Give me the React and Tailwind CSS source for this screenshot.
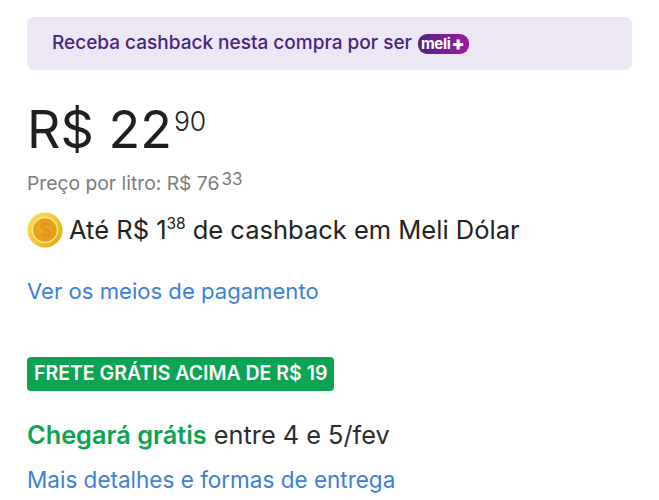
import React from "react";

const Coin = () => (
  <svg width="36" height="36" viewBox="0 0 36 36" className="shrink-0">
    <defs>
      <linearGradient id="coinRim" x1="0" y1="0" x2="1" y2="1">
        <stop offset="0%" stopColor="#fbe05a" />
        <stop offset="55%" stopColor="#f3c52c" />
        <stop offset="100%" stopColor="#e2a012" />
      </linearGradient>
      <radialGradient id="coinFace" cx="45%" cy="45%" r="60%">
        <stop offset="0%" stopColor="#efab22" />
        <stop offset="100%" stopColor="#e29a12" />
      </radialGradient>
    </defs>
    <circle cx="18" cy="18" r="17.5" fill="url(#coinRim)" />
    <circle cx="18" cy="18" r="12.5" fill="url(#coinFace)" stroke="#fde887" strokeWidth="1.5" />
    <path d="M22.5 13.5c-1-1.6-2.7-2-4.3-1.9-2.3.2-3.8 1.5-3.6 3.2.2 3.6 8.1 2 8.2 5.8 0 1.9-1.8 3.2-4.2 3.3-1.9.1-3.6-.6-4.6-2.2" fill="none" stroke="#d9961a" strokeWidth="2.2" />
    <path d="M18 9v18" stroke="#d9961a" strokeWidth="1.4" />
  </svg>
);

const MeliPlus = () => (
  <span className="inline-flex items-center h-[20px] w-[51px] rounded-[9px] bg-gradient-to-r from-[#532088] to-[#9a1a98] pl-[3px] text-white text-[15px] font-bold leading-none tracking-[-0.3px]">
    meli<span className="text-[19px] font-black ml-[1px]">+</span>
  </span>
);

export default function App() {
  return (
    <div className="w-[659px] h-[500px] overflow-hidden bg-white pl-[27px] pr-[27px] pt-[17px] font-['Inter','Lato',sans-serif]">
      <div className="flex items-center gap-[6px] h-[53px] w-[605px] rounded-[7px] bg-[#ede7f5] pl-[25px] text-[19px] font-medium text-[#4a2480]">
        <span>Receba cashback nesta compra por ser</span>
        <MeliPlus />
      </div>

      <div className="flex items-start mt-[27px] h-[66px] text-[#1f1f1f]">
        <span className="text-[52px] leading-[66px]">R$ 22</span>
        <span className="text-[26.5px] leading-[28px] ml-[2px] mt-[10px] font-light">90</span>
      </div>

      <div className="flex items-start mt-[8px] h-[24px] text-[19.3px] text-[#7c7c7c] leading-[24px]">
        <span>Preço por litro: R$ 76</span>
        <span className="text-[17px] leading-[17px] ml-[2px]">33</span>
      </div>

      <div className="flex items-center mt-[15px] h-[40px] text-[25.5px] text-[#222222]">
        <Coin />
        <span className="ml-[6px] flex items-start">
          Até R$ 1<span className="text-[15.5px] leading-[26px]">38</span>
          <span className="ml-[7px]">de cashback em Meli Dólar</span>
        </span>
      </div>

      <div className="mt-[26px] text-[22.1px] leading-[30px] text-[#3d80d8]">Ver os meios de pagamento</div>

      <div className="mt-[51px] flex">
        <span className="flex items-center h-[34px] px-[7px] rounded-[4px] bg-[#0ca453] text-white text-[19.5px] font-semibold">
          FRETE GRÁTIS ACIMA DE R$ 19
        </span>
      </div>

      <div className="mt-[27px] text-[25.3px] leading-[34px] text-[#2d2d2d]">
        <span className="font-semibold text-[#0ca453]">Chegará grátis</span> entre 4 e 5/fev
      </div>

      <div className="mt-[13px] text-[22.5px] leading-[30px] text-[#3d80d8]">Mais detalhes e formas de entrega</div>
    </div>
  );
}
